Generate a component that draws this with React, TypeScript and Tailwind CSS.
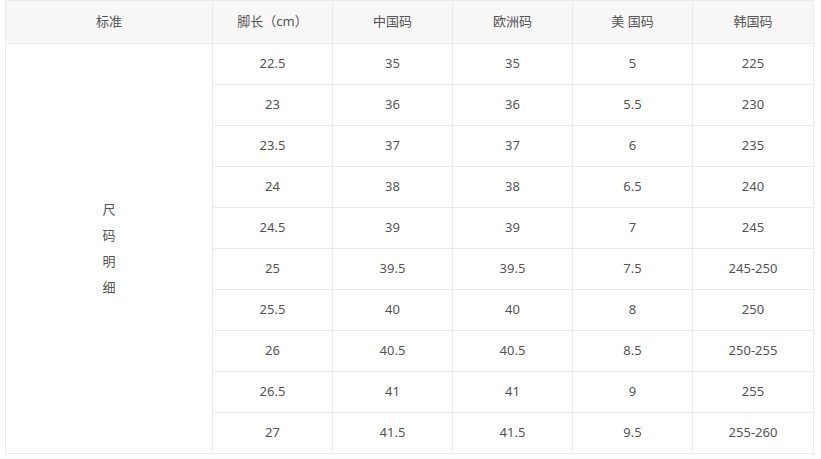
import React from 'react';

const headers = ['标准', '脚长（cm）', '中国码', '欧洲码', '美 国码', '韩国码'];

const rows: string[][] = [
  ['22.5', '35', '35', '5', '225'],
  ['23', '36', '36', '5.5', '230'],
  ['23.5', '37', '37', '6', '235'],
  ['24', '38', '38', '6.5', '240'],
  ['24.5', '39', '39', '7', '245'],
  ['25', '39.5', '39.5', '7.5', '245-250'],
  ['25.5', '40', '40', '8', '250'],
  ['26', '40.5', '40.5', '8.5', '250-255'],
  ['26.5', '41', '41', '9', '255'],
  ['27', '41.5', '41.5', '9.5', '255-260'],
];

const cell = 'border border-[#ebebeb] text-center align-middle p-0';

export default function App() {
  return (
    <div className="bg-white w-[821px] h-[459px] pl-[5px] text-[13px] text-[#555] [font-family:'Noto_Sans','Noto_Sans_CJK_SC',sans-serif]">
      <table className="border-collapse table-fixed w-[808px]">
        <colgroup>
          <col className="w-[207px]" />
          <col className="w-[120px]" />
          <col className="w-[120px]" />
          <col className="w-[120px]" />
          <col className="w-[120px]" />
          <col className="w-[121px]" />
        </colgroup>
        <thead>
          <tr className="h-[43px] bg-[#f8f8f8]">
            {headers.map(h => (
              <th key={h} className={`${cell} font-normal`}>{h}</th>
            ))}
          </tr>
        </thead>
        <tbody>
          {rows.map((r, i) => (
            <tr key={i} className="h-[41px]">
              {i === 0 && (
                <td rowSpan={rows.length} className={cell}>
                  <div className="flex flex-col items-center leading-[26px] -mt-[2px]">
                    <span>尺</span>
                    <span>码</span>
                    <span>明</span>
                    <span>细</span>
                  </div>
                </td>
              )}
              {r.map((v, j) => (
                <td key={j} className={cell}>{v}</td>
              ))}
            </tr>
          ))}
        </tbody>
      </table>
    </div>
  );
}
